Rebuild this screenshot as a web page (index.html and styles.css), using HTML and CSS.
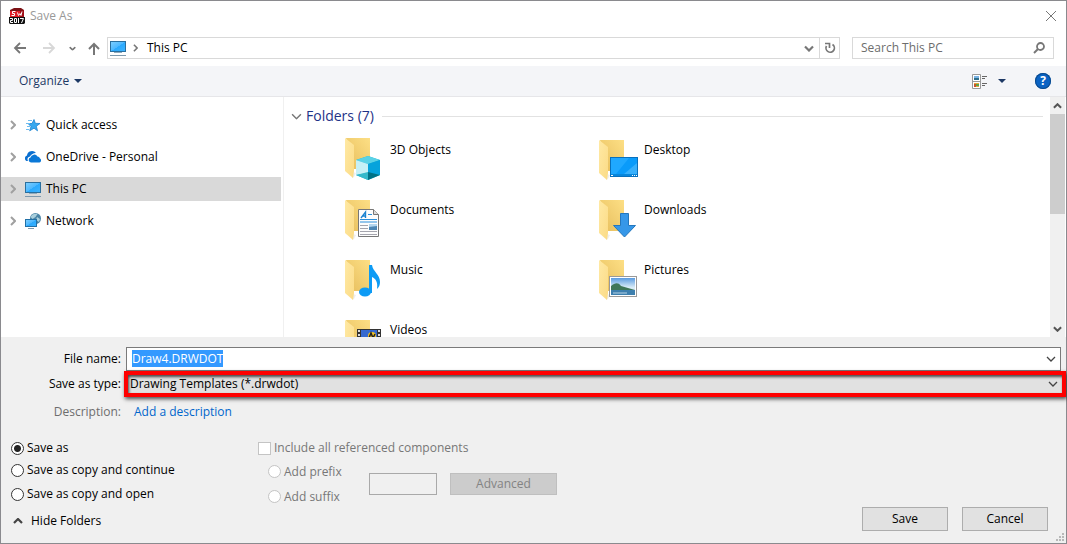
FILE: index.html
```html
<!DOCTYPE html>
<html lang="en">
<head>
<meta charset="utf-8">
<title>Save As</title>
<link rel="stylesheet" href="styles.css">
</head>
<body>
<svg class="defs" aria-hidden="true">
  <defs>
    <linearGradient id="gScreen" x1="0" y1="0" x2="1" y2="1"><stop offset="0" stop-color="#7fd0ff"/><stop offset=".5" stop-color="#4db8ff"/><stop offset=".52" stop-color="#2aa9fd"/><stop offset="1" stop-color="#3fb4ff"/></linearGradient>
    <linearGradient id="gBack" x1="0" y1="1" x2="1" y2="0"><stop offset="0" stop-color="#e6bd5c"/><stop offset="1" stop-color="#fddf85"/></linearGradient>
    <linearGradient id="gFlap" x1="0" y1="0" x2="1" y2="1"><stop offset="0" stop-color="#ffe9a4"/><stop offset="1" stop-color="#fbdb86"/></linearGradient>
    <linearGradient id="gSky" x1="0" y1="0" x2="0" y2="1"><stop offset="0" stop-color="#5a9be0"/><stop offset=".55" stop-color="#d9ecf8"/><stop offset="1" stop-color="#d9ecf8"/></linearGradient>
    <symbol id="pc" viewBox="0 0 16 16"><rect x=".5" y="1.5" width="15" height="10" fill="url(#gScreen)" stroke="#2a6f9e"/><path d="M4 12.500h8" stroke="#8faabd"/><path d="M0 15.500h16" stroke="#7e99ad"/></symbol>
    <symbol id="folder" viewBox="0 0 36 44"><path d="M1 1h24v31H8z" fill="url(#gBack)"/><path d="M8 35l3 1-2 4-2 1z" fill="#eee"/><path d="M0 1l9 7v26l-1 7-8-7z" fill="url(#gFlap)"/></symbol>
    <symbol id="chevR" viewBox="0 0 6 10"><path d="M1 1l4 4-4 4" fill="none" stroke="currentColor" stroke-width="2"/></symbol>
    <symbol id="chevD" viewBox="0 0 10 6"><path d="M1 1l4 4 4-4" fill="none" stroke="currentColor" stroke-width="1.3"/></symbol>
    <symbol id="chevDB" viewBox="0 0 10 6"><path d="M1 1l4 4 4-4" fill="none" stroke="currentColor" stroke-width="2.2"/></symbol>
  </defs>
</svg>
<main class="dialog">
  <header class="titlebar">
    <svg class="app-icon" viewBox="0 0 16 16" aria-hidden="true"><path d="M1 2l4-2h7l3 2v8H1z" fill="#7c1115"/><path d="M1 3h10v6H1z" fill="#e01d25"/><path d="M11 3l4-1v7h-4z" fill="#a10f17"/><path d="M6.500 3.500h-3v2h2v2h-3M8.500 4.500l1 3 1.500-2 1 2 1-4" fill="none" stroke="#fff"/><path d="M0 9h16v6l-1 1H1l-1-1z" fill="#111"/><path d="M1 10.500h2.500v2h-2v2H4M5.500 10.500h2v4h-2zM9.500 15v-5M11 10.500h3.500l-2 4.500" fill="none" stroke="#fff"/></svg>
    <h1 class="title">Save As</h1>
    <button class="icon-btn close" aria-label="Close"><svg width="12" height="12" viewBox="0 0 12 12"><path d="M1 1l10 10M11 1L1 11" stroke="#777" fill="none"/></svg></button>
  </header>

  <nav class="navbar" aria-label="Location">
    <div class="history">
      <button class="icon-btn" aria-label="Back"><svg width="13" height="12" viewBox="0 0 13 12"><path d="M7 1L2 6l5 5M2 6h11" fill="none" stroke="#777" stroke-width="1.800"/></svg></button>
      <button class="icon-btn forward" aria-label="Forward"><svg width="13" height="12" viewBox="0 0 13 12"><path d="M6 1l5 5-5 5M11 6H0" fill="none" stroke="#d8d8d8" stroke-width="1.800"/></svg></button>
      <button class="icon-btn recent" aria-label="Recent locations"><svg width="7" height="5" viewBox="0 0 10 6"><use href="#chevDB"/></svg></button>
      <button class="icon-btn" aria-label="Up"><svg width="12" height="13" viewBox="0 0 12 13"><path d="M1 7l5-5 5 5M6 2v11" fill="none" stroke="#777" stroke-width="2"/></svg></button>
    </div>
    <div class="address">
      <svg class="i16" aria-hidden="true"><use href="#pc"/></svg>
      <svg class="crumb-sep" width="5" height="8" aria-hidden="true"><use href="#chevR"/></svg>
      <span class="crumb">This PC</span>
      <button class="icon-btn addr-drop" aria-label="Previous locations"><svg width="10" height="7"><use href="#chevDB"/></svg></button>
      <button class="icon-btn refresh" aria-label="Refresh"><svg width="12" height="12" viewBox="0 0 12 12"><path d="M8.500 2.500A4.200 4.200 0 1 1 2.500 4" fill="none" stroke="#777" stroke-width="1.700"/><path d="M1 1.500h4.500V6" fill="none" stroke="#777" stroke-width="1.700"/></svg></button>
    </div>
    <label class="search">
      <input class="search-input" type="search" placeholder="Search This PC" aria-label="Search This PC">
      <svg width="12" height="12" viewBox="0 0 12 12" aria-hidden="true"><circle cx="7.500" cy="4.500" r="3.500" fill="none" stroke="#777" stroke-width="1.800"/><path d="M5 7L1 11" stroke="#777" stroke-width="2"/></svg>
    </label>
  </nav>

  <div class="toolbar">
    <button class="organize">Organize <svg width="8" height="4" viewBox="0 0 8 4"><path d="M0 0h8L4 4z" fill="#1c3864"/></svg></button>
    <button class="icon-btn view" aria-label="Change view"><svg width="15" height="15" viewBox="0 0 15 15"><path d="M.5.5h8v14h-8zM.5 7.500h8" fill="#fff" stroke="#999"/><path d="M2 2h5v4H2z" fill="#79b3e6"/><path d="M2 4h5v2H2z" fill="#2f6f8a"/><path d="M2 9h5v4H2z" fill="#e4a63c"/><path d="M2 10h2v3H2z" fill="#c9502e"/><path d="M4 10h3v2H4z" fill="#58a34c"/><path d="M10 2.500h5M10 4.500h3M10 9.500h5M10 11.500h3" stroke="#666"/></svg></button>
    <button class="icon-btn view-drop" aria-label="More view options"><svg width="8" height="4" viewBox="0 0 8 4"><path d="M0 0h8L4 4z" fill="#1c3864"/></svg></button>
    <button class="help" aria-label="Help">?</button>
  </div>

  <div class="browser">
    <ul class="tree">
      <li class="node"><svg class="tw" width="6" height="10"><use href="#chevR"/></svg><svg class="i16" viewBox="0 0 16 16"><path d="M9 2.500l1.300 3.800 4.700.2-3.700 2.700 1.200 4.600L9 11.200l-4.300 2.600L6 9.500 3 6.500h4z" fill="#35a8ef" stroke="#1a83cf" stroke-width=".8"/><path d="M3 3.500h4M1 6.500h4M2 9.500h3M1 12.500h3" stroke="#6dbcf0"/></svg><a class="node-link" href="#quick">Quick access</a></li>
      <li class="node"><svg class="tw" width="6" height="10"><use href="#chevR"/></svg><svg class="i16" viewBox="0 0 16 16"><path d="M1.500 12A3 3 0 0 1 2 6.500a5 5 0 0 1 9-2.500 5 5 0 0 0-3.500 1A5 5 0 0 0 5 7.500C2.500 8 2 10 3 12z" fill="#0a6fd0"/><path d="M6 13.500a2.500 2.500 0 0 1-.5-4.900A3.800 3.800 0 0 1 12.500 7.500 3 3 0 0 1 15 9.500a2.200 2.200 0 0 1-.5 4z" fill="#0a78d7"/></svg><a class="node-link" href="#onedrive">OneDrive - Personal</a></li>
      <li class="node selected"><svg class="tw" width="6" height="10"><use href="#chevR"/></svg><svg class="i16"><use href="#pc"/></svg><a class="node-link" href="#pc-root">This PC</a></li>
      <li class="node"><svg class="tw" width="6" height="10"><use href="#chevR"/></svg><svg class="i16" viewBox="0 0 16 16"><circle cx="10.500" cy="5.500" r="5.500" fill="#4a84a6"/><path d="M5.500 4c1-3 5-4 7-3l-2 3-3 2zM12 4l3 2-1 3-3-2z" fill="#a9cfdc"/><rect x=".5" y="6.500" width="11" height="7" fill="url(#gScreen)" stroke="#2170a6"/><path d="M3 15.500h6" stroke="#7e99ad"/></svg><a class="node-link" href="#network">Network</a></li>
    </ul>
    <section class="content">
      <h2 class="group"><svg width="11" height="7" viewBox="0 0 10 6"><use href="#chevD"/></svg>Folders (7)</h2>
      <div class="folders">
        <a class="folder" href="#3d"><svg class="folder-icon" viewBox="0 2 42 44"><use href="#folder" width="36" height="44"/><path d="M11 23l12-4 12 4v15l-12 5-12-5z" fill="#19b4d4"/><path d="M11 23l12-4 12 4-12 4z" fill="#5ad2e6"/><path d="M11 23l12 4v9l-12 2z" fill="#c6f0f6"/><path d="M23 27l12-4v15l-12-2z" fill="#06a3dc"/><path d="M11 38l12-3v8z" fill="#35b9cb"/><path d="M23 35l12 3-12 5z" fill="#007286"/></svg><span class="folder-name">3D Objects</span></a>
        <a class="folder" href="#desktop"><svg class="folder-icon" viewBox="0 0 42 44"><use href="#folder" width="36" height="44"/><rect x="11.500" y="18.500" width="27" height="19" fill="#0a9bfa" stroke="#0870bd"/><path d="M12 19h18L17 35h-5z" fill="#1fa8ff"/><path d="M38 24L25 35h13z" fill="#38b0fc"/><path d="M12 36h26" stroke="#0672bd"/><path d="M12 36.500h2M33 36.500h1M35 36.500h1M37 36.500h1" stroke="#fff"/></svg><span class="folder-name">Desktop</span></a>
        <a class="folder" href="#documents"><svg class="folder-icon" viewBox="0 0 42 44"><use href="#folder" width="36" height="44"/><path d="M13.500 10.500h15l5 5v22h-20z" fill="#fdfdfd" stroke="#777"/><path d="M28.500 10.500v5h5" fill="#ddd" stroke="#777"/><path d="M16 19l4.500-6v6M17.500 17H21" fill="none" stroke="#1b83d1" stroke-width="1.400"/><path d="M23 15.500h4M15 20.500h17M15 23h17" stroke="#2a8edb"/><path d="M15 26.500h8M15 29.500h8M15 32.500h17M15 35.500h17" stroke="#a5a5ae"/><rect x="24" y="25" width="8" height="6" fill="#4d86b4"/><path d="M24 25h8v2l-8 1z" fill="#b3d6ef"/></svg><span class="folder-name">Documents</span></a>
        <a class="folder" href="#downloads"><svg class="folder-icon" viewBox="0 0 42 44"><use href="#folder" width="36" height="44"/><path d="M21.500 14.500h8v12h7L25.500 38 14.500 26.500h7z" fill="#3697e8" stroke="#2477bd"/></svg><span class="folder-name">Downloads</span></a>
        <a class="folder" href="#music"><svg class="folder-icon" viewBox="0 0 42 44"><use href="#folder" width="36" height="44"/><ellipse cx="20" cy="33" rx="6" ry="4.500" fill="#0d9bf5"/><path d="M24 6h3c1 7 8 9 8 17 0 3-1 5-3 7 1-7-1-10-5-12v16h-3z" fill="#0d9bf5"/></svg><span class="folder-name">Music</span></a>
        <a class="folder" href="#pictures"><svg class="folder-icon" viewBox="0 0 42 44"><use href="#folder" width="36" height="44"/><rect x="10.500" y="17.500" width="27" height="20" fill="#fff" stroke="#999"/><path d="M12 19h24v17H12z" fill="url(#gSky)"/><path d="M12 27c4-3 7-4 10 0l14 4v2H12z" fill="#3f7658"/><path d="M12 31h24v5H12z" fill="#3d7fae"/><path d="M14 34h14" stroke="#b7d3e4"/></svg><span class="folder-name">Pictures</span></a>
        <a class="folder" href="#videos"><svg class="folder-icon" viewBox="0 0 42 44"><use href="#folder" width="36" height="44"/><path d="M12 10h24v22H12z" fill="#333"/><path d="M16 11h16v18H16z" fill="#3569d0"/><path d="M14 11v20M34 11v20" stroke="#ddd" stroke-width="2" stroke-dasharray="2 2"/><circle cx="27" cy="17" r="4" fill="#f4c321"/><path d="M24 19l2-5 2 5 2-4" stroke="#222" fill="none" stroke-width="1.500"/></svg><span class="folder-name">Videos</span></a>
      </div>
    </section>
    <div class="scrollbar">
      <button class="scroll-btn" aria-label="Scroll up"><svg class="flip" width="9" height="6"><use href="#chevDB"/></svg></button>
      <div class="thumb"></div>
      <button class="scroll-btn last" aria-label="Scroll down"><svg width="9" height="6"><use href="#chevDB"/></svg></button>
    </div>
  </div>

  <form class="form">
    <div class="fields">
      <label class="label" for="fname">File name:</label>
      <div class="field name-field"><input class="name-input" id="fname" type="text" value="Draw4.DRWDOT"><svg class="field-chev" width="10" height="6" aria-hidden="true"><use href="#chevD"/></svg></div>
      <label class="label" for="ftype">Save as type:</label>
      <div class="field type-field"><select class="type-select" id="ftype"><option>Drawing Templates (*.drwdot)</option></select><svg class="field-chev" width="10" height="6" aria-hidden="true"><use href="#chevD"/></svg></div>
      <span class="label muted">Description:</span>
      <a class="add-desc" href="#description">Add a description</a>
    </div>
    <div class="options">
      <div class="modes">
        <label class="opt"><input class="radio" type="radio" name="mode" checked>Save as</label>
        <label class="opt"><input class="radio" type="radio" name="mode">Save as copy and continue</label>
        <label class="opt tall"><input class="radio" type="radio" name="mode">Save as copy and open</label>
      </div>
      <div class="refs">
        <label class="opt off"><input class="check" type="checkbox" disabled>Include all referenced components</label>
        <div class="rename">
          <div class="affix">
            <label class="opt mid off"><input class="radio" type="radio" name="affix" disabled>Add prefix</label>
            <label class="opt mid off"><input class="radio" type="radio" name="affix" disabled>Add suffix</label>
          </div>
          <input class="affix-text" type="text" aria-label="Prefix or suffix" disabled>
          <button class="btn advanced" type="button" disabled>Advanced</button>
        </div>
      </div>
    </div>
    <div class="actions">
      <button class="hide" type="button"><svg class="flip" width="10" height="6"><use href="#chevDB"/></svg>Hide Folders</button>
      <div class="buttons">
        <button class="btn" type="button">Save</button>
        <button class="btn" type="button">Cancel</button>
      </div>
    </div>
  </form>
  <svg class="grip" width="8" height="8" viewBox="0 0 8 8" aria-hidden="true"><path d="M6 0h2v2H6zM3 3h2v2H3zM6 3h2v2H6zM0 6h2v2H0zM3 6h2v2H3zM6 6h2v2H6z" fill="#b8b8b8"/></svg>
</main>
<script src="script.js"></script>
</body>
</html>
```
FILE: styles.css
```css
* { box-sizing: border-box; }
body { margin: 0; font: 12px/16px "Segoe UI", "Open Sans", "Noto Sans", sans-serif; color: #000; background: #fff; }
button, input, select { font: inherit; color: inherit; margin: 0; }
button { border: 0; background: none; padding: 0; }
a { color: inherit; text-decoration: none; }
svg { flex: none; display: block; }
.defs { position: absolute; width: 0; height: 0; }
.flip { transform: scaleY(-1); }
.i16 { width: 16px; height: 16px; }
.icon-btn { display: flex; align-items: center; justify-content: center; }

.dialog { position: relative; display: flex; flex-direction: column; height: 100vh; border: 1px solid #8a8a8e; }

.titlebar { display: flex; align-items: center; height: 30px; padding: 0 9px 0 8px; }
.app-icon { width: 16px; height: 16px; }
.title { margin: 0 0 0 5px; font-size: 12px; font-weight: 400; color: #999; }
.close { margin-left: auto; }

.navbar { display: flex; height: 35px; padding: 6px 12px 7px 12px; }
.history { display: flex; align-items: center; width: 94px; }
.forward { margin-left: 17px; }
.recent { margin: 0 12px 0 13px; color: #777; }
.address { flex: 1; display: flex; align-items: center; border: 1px solid #d9d9d9; padding-left: 2px; }
.crumb-sep { margin: 0 9px 0 7px; color: #777; }
.addr-drop { margin-left: auto; width: 20px; color: #777; }
.refresh { width: 20px; height: 100%; border-left: 1px solid #d9d9d9; }
.search { display: flex; align-items: center; width: 202px; margin-left: 12px; padding: 0 8px; border: 1px solid #d9d9d9; }
.search-input { flex: 1; min-width: 0; border: 0; padding: 0; outline: 0; background: none; }
.search-input::placeholder { color: #6d6d6d; opacity: 1; }

.toolbar { display: flex; align-items: center; height: 31px; padding: 0 15px 0 18px; background: #f4f5f8; border-bottom: 1px solid #e6e6e9; }
.organize { display: flex; align-items: center; gap: 5px; color: #1c3864; }
.view { margin-left: auto; }
.view-drop { margin: 0 29px 0 11px; }
.help { width: 16px; height: 16px; border-radius: 50%; background: #0a63c4; box-shadow: inset 0 0 0 1px #0b4a8c; color: #fff; font-weight: 700; line-height: 16px; }

.browser { flex: 1; min-height: 0; display: flex; padding-right: 1px; }
.tree { list-style: none; width: 283px; margin: 0; padding: 16px 2px 0 0; border-right: 1px solid #f0f0f0; }
.node { display: flex; align-items: center; height: 24px; margin-bottom: 8px; padding-left: 9px; }
.selected { background: #d9d9d9; }
.tw { margin-right: 9px; color: #a0a0a0; }
.node-link { margin-left: 5px; }
.content { flex: 1; min-width: 0; overflow: hidden; padding: 9px 7px 0 7px; }
.group { display: flex; align-items: center; gap: 4px; margin: 0 0 9px; font-size: 14px; line-height: 20px; font-weight: 400; color: #1e3287; }
.group svg { color: #777; }
.group::after { content: ""; flex: 1; height: 1px; margin-left: 4px; background: #e2e2e2; }
.folders { display: grid; grid-template-columns: repeat(auto-fill, 254px); grid-auto-rows: 60px; padding-left: 54px; }
.folder { display: flex; align-items: flex-start; gap: 3px; }
.folder-icon { width: 42px; height: 44px; margin-top: 4px; overflow: visible; }
.folder-name { margin-top: 7px; }
.scrollbar { display: flex; flex-direction: column; width: 15px; background: #f0f0f0; }
.scroll-btn { display: flex; align-items: center; justify-content: center; height: 17px; color: #555; }
.last { margin-top: auto; }
.thumb { height: 100px; background: #cdcdcd; }

.form { background: #f0f0f0; padding: 10px 2px 8px 8px; }
.fields { display: grid; grid-template-columns: 112px 1fr; grid-template-rows: 24px 26px 30px; column-gap: 3px; align-items: center; }
.label { text-align: right; }
.muted { color: #6d6d6d; }
.field { position: relative; height: 100%; }
.field-chev { position: absolute; right: 4px; top: 50%; margin-top: -3px; color: #444; pointer-events: none; }
.name-field { margin: 0 3px 0 2px; border: 1px solid #7a7a7a; background: #fff; }
.name-input { width: 100%; height: 100%; border: 0; padding: 0 24px 2px 5px; outline: 0; background: none; }
.name-input::selection { background: #3399ff; color: #fff; }
.type-field { border: 4px solid #fe0000; box-shadow: 1px 2px 4px #000000b0, inset 1px 2px 3px #000000b0; background: #e1e1e1; margin-right: -2px; }
.type-select { display: block; width: 100%; height: 100%; appearance: none; border: 0; padding: 0 20px 0 2px; background: none; outline: 0; }
.add-desc { margin-left: 10px; color: #0066cc; }

.options { display: flex; height: 80px; padding-top: 10px; }
.modes { width: 249px; }
.opt { display: flex; align-items: center; gap: 3px; height: 22px; }
.tall { height: 26px; }
.mid { height: 25px; }
.off { color: #777; }
.radio, .check { appearance: none; flex: none; width: 13px; height: 13px; border: 1px solid #333; background: #fff; }
.radio { border-radius: 50%; margin-left: 2px; }
.radio:checked { background: radial-gradient(circle, #222 0 3px, #fff 4px); }
.radio:disabled, .check:disabled { border-color: #c4c4c4; }
.rename { display: flex; align-items: center; padding-left: 8px; }
.affix { width: 103px; }
.affix-text { width: 68px; height: 22px; border: 1px solid #a9a9a9; background: none; }
.btn { width: 86px; height: 24px; border: 1px solid #adadad; background: #e1e1e1; }
.advanced { width: 107px; height: 22px; margin-left: 13px; border-color: #bfbfbf; background: #ccc; color: #838383; }
.actions { display: flex; justify-content: space-between; align-items: flex-start; height: 28px; }
.hide { display: flex; align-items: center; gap: 8px; height: 28px; padding-left: 4px; }
.hide svg { color: #444; }
.buttons { display: flex; gap: 14px; padding-right: 16px; }
.grip { position: absolute; right: 2px; bottom: 2px; }
```
FILE: script.js
```js
const nameInput = document.getElementById("fname");
nameInput.focus();
nameInput.select();
```
